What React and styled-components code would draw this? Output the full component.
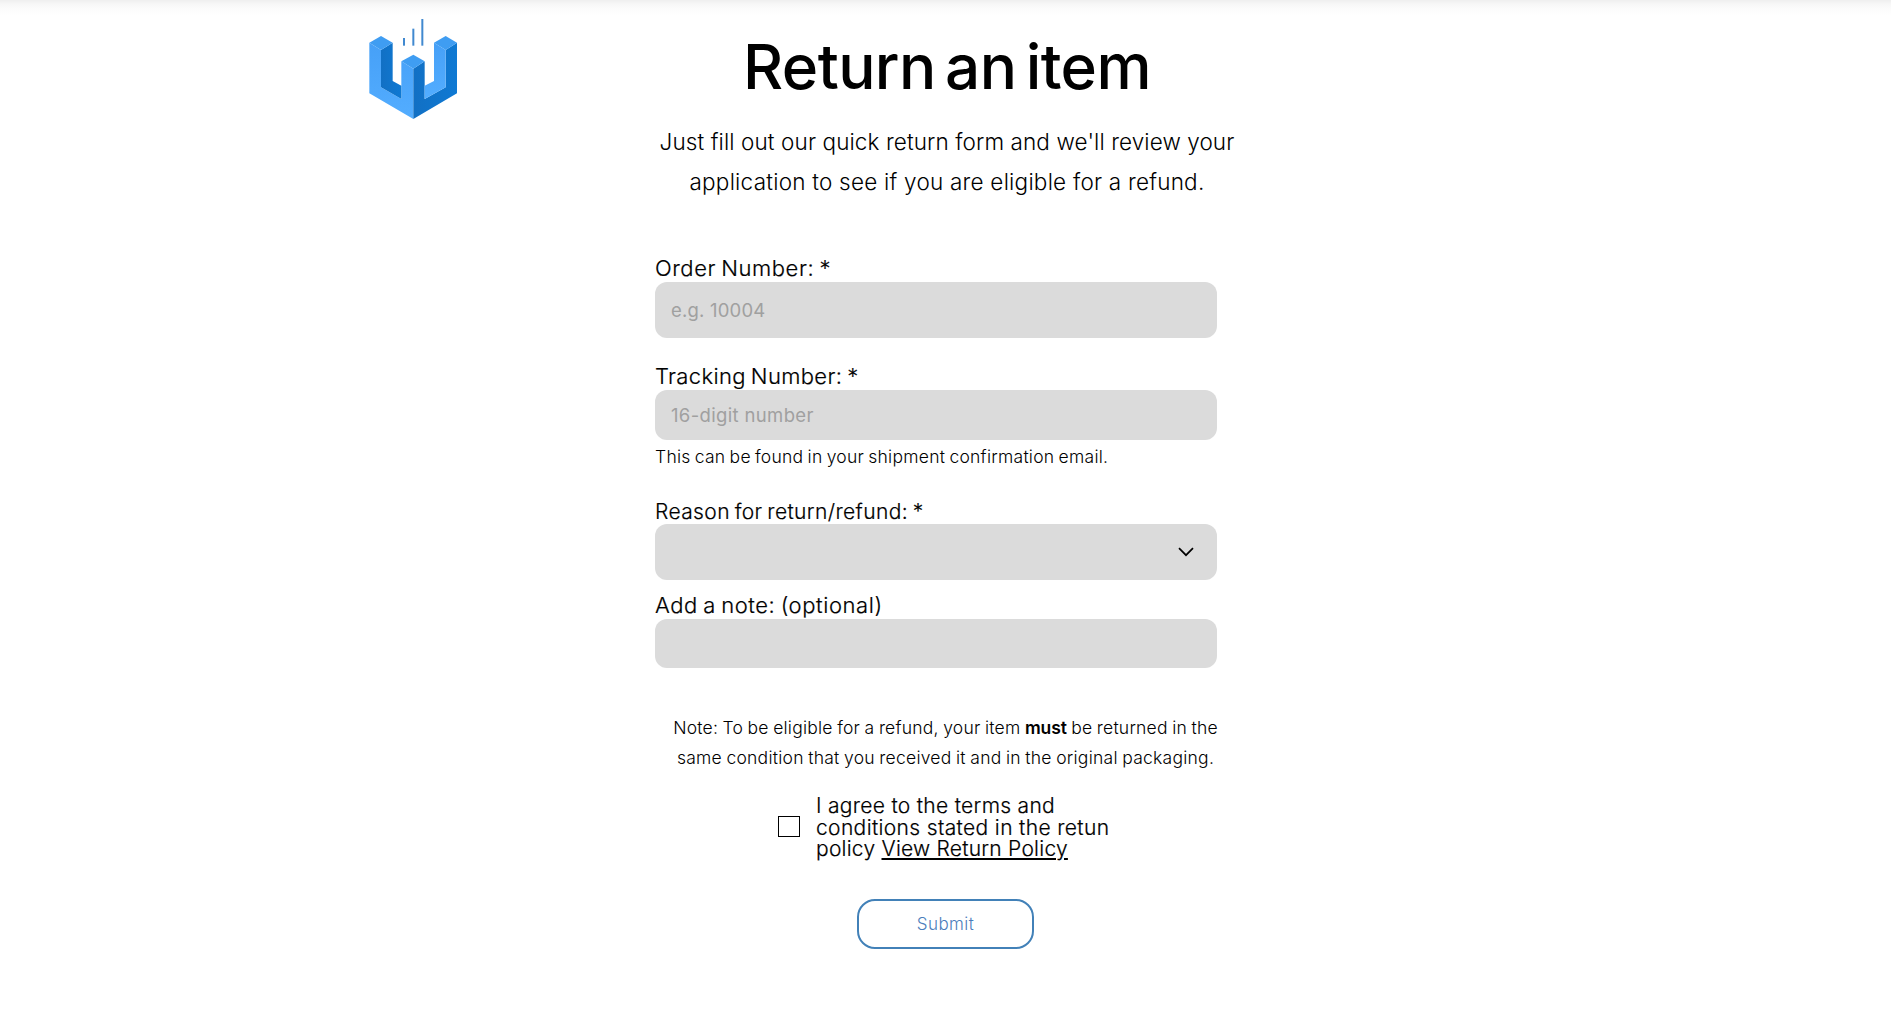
import React from 'react';
import styled, { createGlobalStyle } from 'styled-components';

const GlobalStyle = createGlobalStyle`
  *, *::before, *::after { box-sizing: border-box; }
  body {
    margin: 0;
    background: #fff;
    color: #000;
    font-family: Inter, "Liberation Sans", sans-serif;
  }
`;

const Page = styled.main`
  display: grid;
  grid-template-columns: 655px 581px;
  align-content: start;
  min-height: 1021px;
  background: linear-gradient(#efefef 0, #f7f7f7 4px, #fcfcfc 9px, #fff 15px);
`;

const LogoCell = styled.div`
  padding: 18px 0 0 369px;
`;

const Logo = styled.svg`
  display: block;
  width: 88px;
  height: 101px;
`;

const Content = styled.div`
  display: flex;
  flex-direction: column;
  padding-top: 29px;
`;

const Header = styled.header`
  padding-left: 3px;
  text-align: center;
  white-space: nowrap;
`;

const Title = styled.h1`
  margin: 0;
  font-size: 62px;
  font-weight: 500;
  line-height: 76px;
  letter-spacing: -0.6px;
  word-spacing: -6.6px;
`;

const Subtitle = styled.p`
  margin: 17px 0 0;
  font-size: 22.5px;
  font-weight: 300;
  line-height: 40px;
`;

const Line = styled.span`
  display: block;
  letter-spacing: ${(p) => p.$tracking}px;
`;

const Form = styled.form`
  display: flex;
  flex-direction: column;
  margin-top: 53px;
`;

const Field = styled.div`
  display: flex;
  flex-direction: column;
  width: 562px;
  margin-top: ${(p) => p.$gap || 0}px;
`;

const Label = styled.label`
  margin-bottom: ${(p) => (p.$compact ? -1 : 1)}px;
  font-size: ${(p) => (p.$compact ? 21 : 22)}px;
  font-weight: 300;
  line-height: 26px;
  letter-spacing: ${(p) => p.$tracking || 0}px;
  word-spacing: -1.5px;
  -webkit-text-stroke: 0.2px #000;
`;

const Input = styled.input`
  width: 100%;
  height: ${(p) => p.$height}px;
  padding: 0 16px;
  border: 0;
  border-radius: 12px;
  background: #dbdbdb;
  color: #000;
  font: 400 18.5px Inter, "Liberation Sans", sans-serif;
  letter-spacing: ${(p) => p.$tracking || 0}px;

  &::placeholder {
    color: #a0a0a0;
    opacity: 1;
  }
`;

const Select = styled.button`
  display: flex;
  align-items: center;
  justify-content: flex-end;
  height: 56px;
  padding: 0 23px 0 16px;
  border: 0;
  border-radius: 12px;
  background: #dbdbdb;
`;

const Chevron = styled.svg`
  width: 16px;
  height: 10px;
  fill: none;
  stroke: #000;
  stroke-width: 1.7;
`;

const Hint = styled.p`
  margin: 5px 0 0;
  font-size: 17.5px;
  font-weight: 300;
  line-height: 24px;
  letter-spacing: 0.26px;
  word-spacing: -1px;
`;

const Note = styled.p`
  margin: 45px 0 0;
  font-size: 17.5px;
  font-weight: 300;
  line-height: 30px;
  text-align: center;
  white-space: nowrap;
  word-spacing: -0.7px;

  strong {
    font-weight: 600;
    letter-spacing: -0.1px;
  }
`;

const Agreement = styled.div`
  display: flex;
  gap: 16px;
  margin-top: 22px;
  padding-left: 123px;
`;

const Checkbox = styled.input`
  appearance: none;
  width: 22px;
  height: 21px;
  margin: 21px 0 0;
  border: 1px solid #000;
  background: #fff;
`;

const Terms = styled.div`
  font-size: 21px;
  font-weight: 300;
  line-height: 21.5px;
  white-space: nowrap;
  -webkit-text-stroke: 0.2px #000;
`;

const PolicyLink = styled.a`
  color: inherit;
  text-decoration: underline;
  text-decoration-thickness: 2px;
  text-underline-offset: 2px;
`;

const Submit = styled.button`
  align-self: center;
  width: 177px;
  height: 50px;
  margin-top: 39px;
  padding: 0;
  border: 2px solid #4281b8;
  border-radius: 18px;
  background: #fff;
  color: #4b7dbb;
  font: 300 17px Inter, "Liberation Sans", sans-serif;
  letter-spacing: 0.4px;
`;

function BrandMark() {
  return (
    <Logo viewBox="42 54 264 303" aria-label="W logo">
      <defs>
        <linearGradient id="light" x1="0" y1="0" x2="0" y2="1">
          <stop offset="0" stopColor="#46a0f7" />
          <stop offset="1" stopColor="#53adff" />
        </linearGradient>
        <linearGradient id="dark" x1="0" y1="0" x2="1" y2="0">
          <stop offset="0" stopColor="#1270c4" />
          <stop offset="1" stopColor="#0f79d3" />
        </linearGradient>
      </defs>
      <g fill="#4189d0">
        <rect x="144" y="114" width="6" height="23" />
        <rect x="172" y="86" width="6" height="51" />
        <rect x="199" y="57" width="6" height="80" />
      </g>
      <path fill="url(#light)" d="M43 128 78 150V262L139 297V184L175 206V357L43 280Z" />
      <path fill="url(#dark)" d="M78 150 113 128V243L139 257V297L78 262Z" />
      <path fill="url(#dark)" d="M175 206 209 184V297L272 262V150L306 128V280L175 357Z" />
      <path fill="url(#light)" d="M237 128 272 150V262L209 297V257L237 243Z" />
      <g fill="#3f9df2">
        <path d="M43 128 78 108 113 128 78 150Z" />
        <path d="M139 184 175 164 209 184 175 206Z" />
        <path d="M237 128 272 108 306 128 272 150Z" />
      </g>
    </Logo>
  );
}

export default function App() {
  return (
    <>
      <GlobalStyle />
      <Page>
        <LogoCell>
          <BrandMark />
        </LogoCell>
        <Content>
          <Header>
            <Title>Return an item</Title>
            <Subtitle>
              <Line $tracking={0.1}>Just fill out our quick return form and we'll review your</Line>
              <Line $tracking={0.23}>application to see if you are eligible for a refund.</Line>
            </Subtitle>
          </Header>
          <Form>
            <Field>
              <Label htmlFor="order" $tracking={0.57}>Order Number: *</Label>
              <Input id="order" placeholder="e.g. 10004" $height={56} $tracking={0.2} />
            </Field>
            <Field $gap={25}>
              <Label htmlFor="tracking" $tracking={0.35}>Tracking Number: *</Label>
              <Input id="tracking" placeholder="16-digit number" $height={50} $tracking={0.35} />
              <Hint>This can be found in your shipment confirmation email.</Hint>
            </Field>
            <Field $gap={30}>
              <Label htmlFor="reason" $compact $tracking={0.38}>Reason for return/refund: *</Label>
              <Select id="reason" type="button">
                <Chevron viewBox="0 0 16 10">
                  <path d="M1 1.2 8 8.2 15 1.2" />
                </Chevron>
              </Select>
            </Field>
            <Field $gap={12}>
              <Label htmlFor="note" $tracking={0.58}>Add a note: (optional)</Label>
              <Input id="note" $height={49} />
            </Field>
            <Note>
              <Line $tracking={0.23}>
                Note: To be eligible for a refund, your item <strong>must</strong> be returned in the
              </Line>
              <Line $tracking={0.25}>same condition that you received it and in the original packaging.</Line>
            </Note>
            <Agreement>
              <Checkbox type="checkbox" id="agree" />
              <Terms>
                <Line $tracking={0.3}>I agree to the terms and</Line>
                <Line $tracking={0.36}>conditions stated in the retun</Line>
                <Line $tracking={0.24}>
                  policy <PolicyLink href="#policy">View Return Policy</PolicyLink>
                </Line>
              </Terms>
            </Agreement>
            <Submit type="button">Submit</Submit>
          </Form>
        </Content>
      </Page>
    </>
  );
}
